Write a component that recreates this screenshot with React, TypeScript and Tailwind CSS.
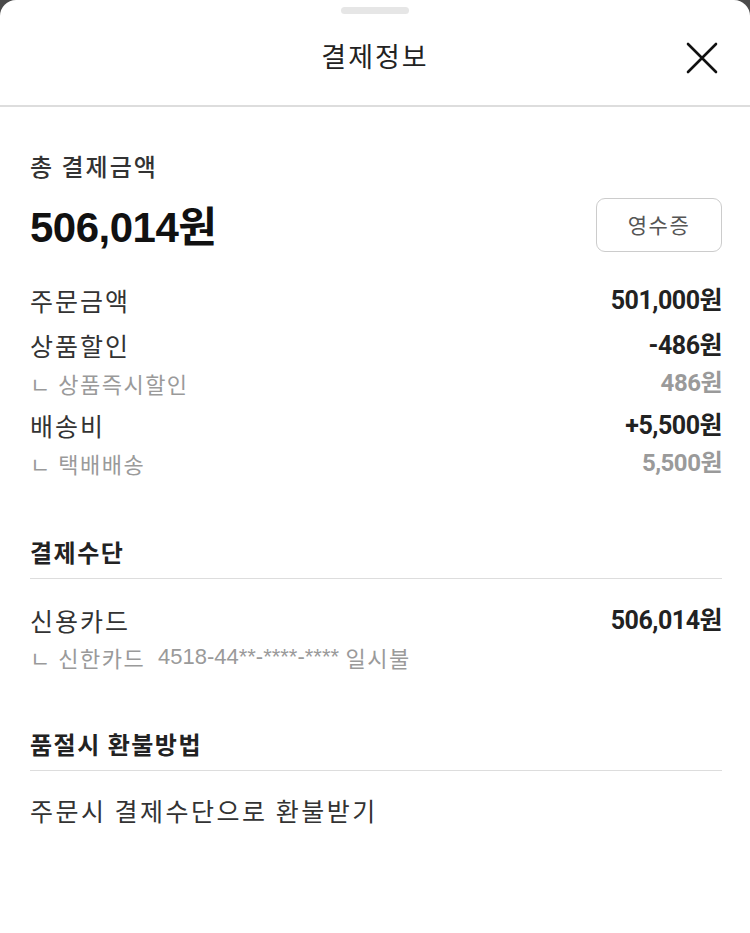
import React from 'react';

const KR = { fontFamily: '"Noto Sans CJK KR", "Noto Sans", sans-serif' };
const NUM = { fontFamily: 'Roboto, "Noto Sans CJK KR", sans-serif' };
const ARIAL = { fontFamily: '"Liberation Sans", "Noto Sans CJK KR", sans-serif' };

type Row = { label: string; value: string; sub?: boolean };

const PRICE_ROWS: Row[] = [
  { label: '주문금액', value: '501,000원' },
  { label: '상품할인', value: '-486원' },
  { label: 'ㄴ 상품즉시할인', value: '486원', sub: true },
  { label: '배송비', value: '+5,500원' },
  { label: 'ㄴ 택배배송', value: '5,500원', sub: true },
];

function PriceRow({ label, value, sub }: Row) {
  return (
    <div
      className={`flex items-center justify-between ${
        sub ? 'h-[36px] -mt-[3px] mb-[2px]' : 'h-[45px]'
      }`}
    >
      <span
        className={
          sub
            ? 'text-[22px] leading-[36px] tracking-[1.5px] text-[#9a9a9a]'
            : 'text-[25px] leading-[45px] tracking-[2px] text-[#333]'
        }
        style={KR}
      >
        {label}
      </span>
      <span
        className={`font-bold tracking-[-0.5px] ${
          sub ? 'text-[24px] leading-[36px] text-[#9a9a9a]' : 'text-[25px] leading-[45px] text-[#222]'
        }`}
        style={NUM}
      >
        {value}
      </span>
    </div>
  );
}

function SectionHead({ children }: { children: React.ReactNode }) {
  return (
    <div className="pb-[8px] border-b border-[#dddddd]">
      <div
        className="text-[24px] leading-[36px] tracking-[1.5px] font-bold text-[#222]"
        style={KR}
      >
        {children}
      </div>
    </div>
  );
}

export default function App() {
  return (
    <div className="w-[750px] h-[933px] bg-[#4a4a4a]">
      <div className="h-full bg-white rounded-t-[16px] flex flex-col">
        {/* Handle */}
        <div className="flex justify-center pt-[7px]">
          <div className="w-[68px] h-[7px] rounded-full bg-[#e6e6e6]" />
        </div>

        {/* Header */}
        <div className="relative h-[93px] flex items-center justify-center border-b-2 border-[#dddddd]">
          <span
            className="text-[27px] leading-[40px] tracking-[2px] text-[#222] -mt-[8px]"
            style={KR}
          >
            결제정보
          </span>
          <button className="absolute right-[32px] top-[28px] w-[32px] h-[32px] flex items-center justify-center">
            <svg width="32" height="32" viewBox="0 0 32 32" fill="none">
              <path d="M2 2 L30 30 M30 2 L2 30" stroke="#111" strokeWidth="2.6" strokeLinecap="round" />
            </svg>
          </button>
        </div>

        <div className="pl-[30px] pr-[28px] pt-[41px]">
          {/* Total */}
          <div
            className="text-[24px] leading-[36px] tracking-[2px] font-medium text-[#333]"
            style={KR}
          >
            총 결제금액
          </div>
          <div className="flex items-center justify-between mt-[14px] h-[54px]">
            <span
              className="text-[42px] leading-[54px] font-bold text-[#111] tracking-[-0.5px] translate-y-[3px]"
              style={ARIAL}
            >
              506,014원
            </span>
            <button
              className="w-[126px] h-[54px] rounded-[9px] border border-[#cccccc] text-[21px] tracking-[1.5px] text-[#555]"
              style={KR}
            >
              영수증
            </button>
          </div>

          <div className="mt-[26px]">
            {PRICE_ROWS.map((r) => (
              <PriceRow key={r.label} {...r} />
            ))}
          </div>

          {/* Payment method */}
          <div className="mt-[53px]">
            <SectionHead>결제수단</SectionHead>
          </div>
          <div className="pt-[19px]">
            <div className="flex items-center justify-between h-[45px]">
              <span className="text-[25px] leading-[45px] tracking-[2px] text-[#333]" style={KR}>
                신용카드
              </span>
              <span
                className="text-[25px] leading-[45px] font-bold text-[#222] tracking-[-0.5px]"
                style={NUM}
              >
                506,014원
              </span>
            </div>
            <div
              className="h-[36px] -mt-[4px] flex items-center text-[22px] leading-[36px] tracking-[1.5px] text-[#9a9a9a]"
              style={KR}
            >
              ㄴ 신한카드&nbsp;&nbsp;
              <span style={ARIAL} className="tracking-[0px]">
                4518-44**-****-****
              </span>
              &nbsp;일시불
            </div>
          </div>

          {/* Refund */}
          <div className="mt-[51px]">
            <SectionHead>품절시 환불방법</SectionHead>
          </div>
          <div
            className="pt-[17px] text-[25px] leading-[45px] tracking-[2.5px] text-[#333]"
            style={KR}
          >
            주문시 결제수단으로 환불받기
          </div>
        </div>
      </div>
    </div>
  );
}
